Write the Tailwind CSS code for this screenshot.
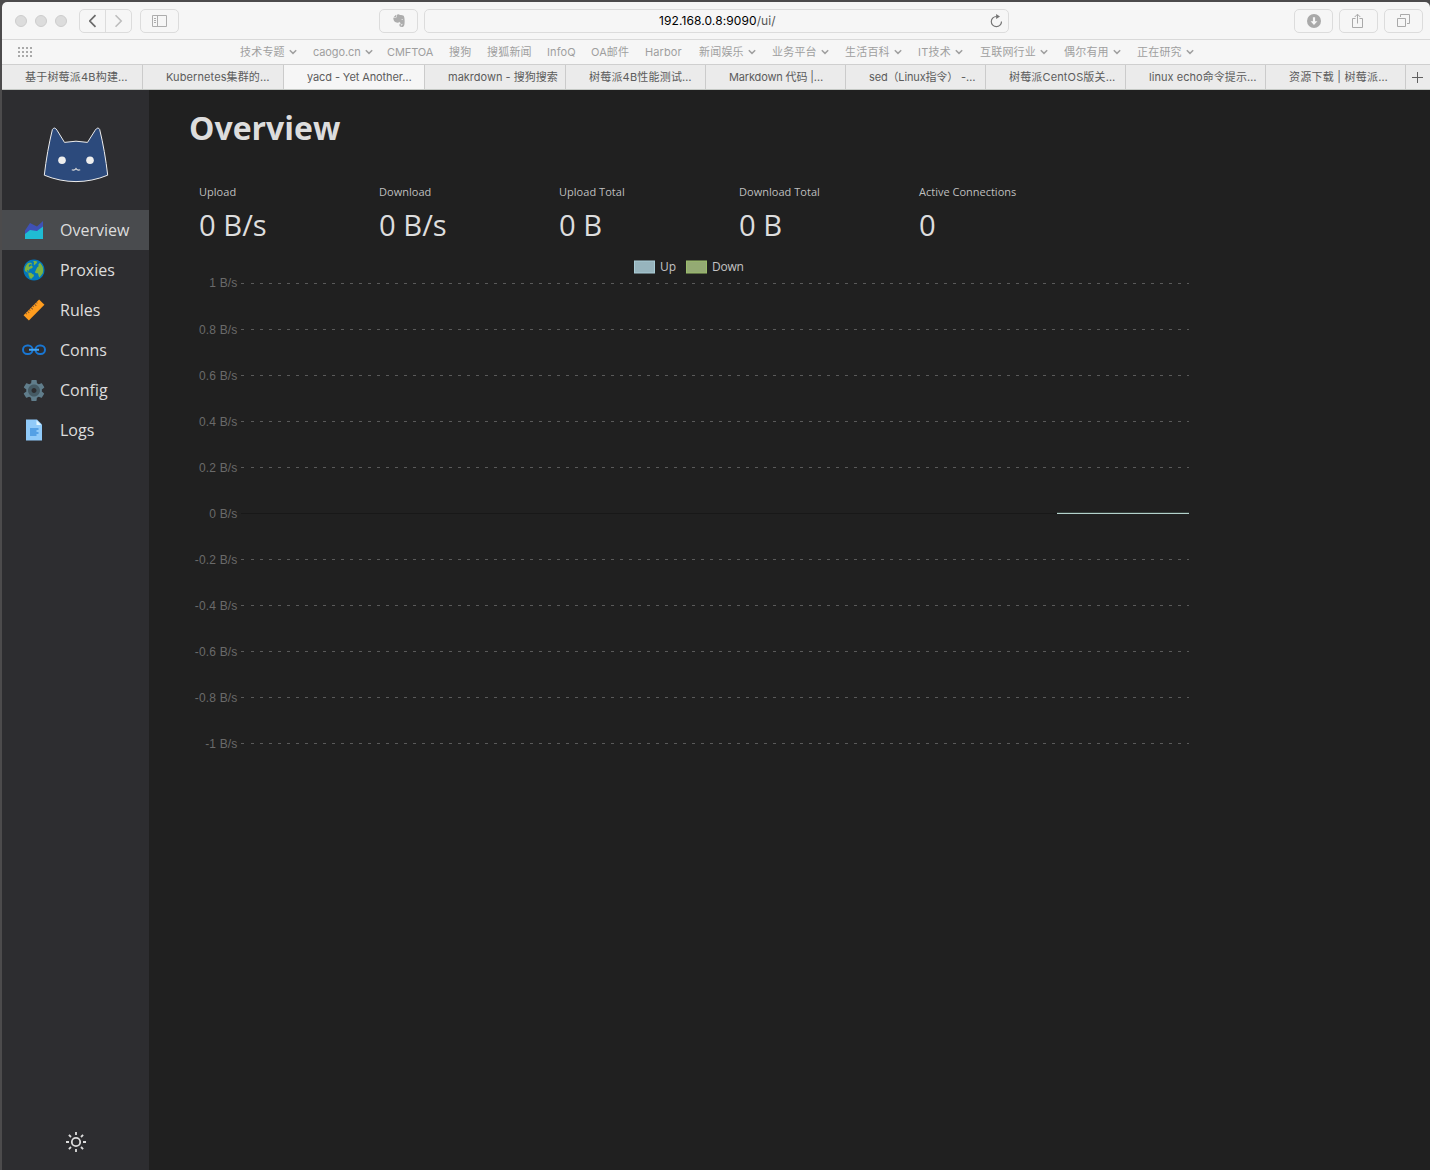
<!DOCTYPE html>
<html lang="zh-CN">
<head>
<meta charset="utf-8">
<title>yacd - Yet Another Clash Dashboard</title>
<script src="https://cdn.jsdelivr.net/npm/@tailwindcss/browser@4"></script>
</head>
<body class="h-[1170px] w-[1430px] overflow-hidden bg-[#4c4b4c] pt-0.5 pl-0.5">
<svg class="hidden"><defs><symbol id="chev" viewBox="0 0 8 6"><path d="M.8 1.2 4 4.400 7.200 1.2" fill="none" stroke="#a0a0a0" stroke-width="1.5"/></symbol></defs></svg>
<div class="flex h-[1168px] w-[1428px] flex-col overflow-hidden rounded-t-[5px] bg-[#202020]">

  <!-- Browser toolbar -->
  <div class="flex h-[38px] shrink-0 items-center border-b border-[#d9d9d9] bg-[#f6f6f6]">
    <div class="ml-[13px] flex gap-2">
      <span class="size-3 rounded-full border border-[#cdcdcd] bg-[#dcdcdc]"></span>
      <span class="size-3 rounded-full border border-[#cdcdcd] bg-[#dcdcdc]"></span>
      <span class="size-3 rounded-full border border-[#cdcdcd] bg-[#dcdcdc]"></span>
    </div>
    <div class="ml-3 flex h-6 w-[53px] rounded-[5px] border border-[#dcdcdc]">
      <span class="flex w-[26px] items-center justify-center border-r border-[#dcdcdc]"><svg width="8" height="14" viewBox="0 0 8 14" fill="none" stroke="#6a6a6a" stroke-width="1.7"><path d="M6.500 1.200 .8 7 6.500 12.800"/></svg></span>
      <span class="flex flex-1 items-center justify-center"><svg width="8" height="14" viewBox="0 0 8 14" fill="none" stroke="#bdbdbd" stroke-width="1.6"><path d="M.5 1.200 6.200 7 .5 12.800"/></svg></span>
    </div>
    <div class="ml-2 flex h-6 w-[39px] items-center justify-center rounded-[5px] border border-[#dcdcdc]">
      <svg width="15" height="12" viewBox="0 0 15 12" fill="none" stroke="#adadad"><path d="M.5 .5h14v11H.5zM5.500 .5v11M2 3.500h2M2 5.500h2M2 7.500h2"/></svg>
    </div>
    <div class="ml-[200px] flex h-6 w-[39px] items-center justify-center rounded-[5px] border border-[#dcdcdc]">
      <svg width="12" height="14" viewBox="0 0 12 14" fill="#adadad"><path d="M3.600 .9C4.800-.1 6.200 0 6.900 1c1.400.1 3.400.2 3.900 1.100.9 1.900 1 5.200.7 7.800-.2 2-1 3.200-2.700 3.200-1.600 0-2.400-.8-2.400-2 0-1.300.9-1.900 2.600-1.800v1c-.8 0-1.300.1-1.300.7 0 .7 1.600.6 1.700-.5 0-1-.6-1.400-1.500-1.500-.8-.1-1.300-.5-1.500-1.300-.7 1.100-1.800 1.200-3 .9C1.500 8.200.7 6.800.4 5c-.1-.6-.1-1 .1-1.200h2.200c.6 0 .9-.3.9-.8z"/><path d="M.5 3.200 3 .8v2.400z"/><path d="M8.400 5.700c.1-.9 1.400-.9 1.600.2-.6-.2-1.100-.2-1.600-.2z" fill="#f6f6f6"/></svg>
    </div>
    <div class="ml-1.5 flex h-6 w-[585px] items-center rounded-[5px] border border-[#dcdcdc] font-[Inter,sans-serif] text-xs text-black">
      <span class="ml-[234px] w-[330px] pt-px tracking-[0.1px]">192.168.0.8:9090<span class="text-[#555]">/ui/</span></span>
      <svg width="14" height="14" viewBox="0 0 14 14" fill="none" stroke="#757575" stroke-width="1.2"><path d="M7.600 2.500A5.100 5.100 0 1 0 12.500 7.500"/><path d="M7.100 0 11 2.600 7.100 5z" fill="#757575" stroke="none"/></svg>
    </div>
    <div class="ml-[285px] flex gap-1.5">
      <span class="flex h-6 w-[39px] items-center justify-center rounded-[5px] border border-[#dcdcdc]"><svg width="14" height="14" viewBox="0 0 14 14"><circle cx="7" cy="7" r="7" fill="#a9a9a9"/><path d="M5.900 3.200h2.200v4h2.300L7 10.900 3.600 7.200h2.300z" fill="#f6f6f6"/></svg></span>
      <span class="flex h-6 w-[39px] items-center justify-center rounded-[5px] border border-[#dcdcdc] pr-px"><svg width="12" height="16" viewBox="0 0 12 16" fill="none" stroke="#a9a9a9"><path d="M3.500 5.500h-3v9h10v-9h-3M5.500 10.500V1.500M2.700 4 5.500 1.200 8.300 4"/></svg></span>
      <span class="flex h-6 w-[39px] items-center justify-center rounded-[5px] border border-[#dcdcdc]"><svg width="13" height="13" viewBox="0 0 13 13" fill="none" stroke="#a9a9a9"><path d="M.5 4.500h8v8h-8zM3.500 3V.5h9v9H10"/></svg></span>
    </div>
  </div>

  <!-- Favourites -->
  <div class="flex h-[25px] shrink-0 items-center border-b border-[#cfcfcf] bg-[#f6f6f6] font-[Inter,'Noto_Sans_CJK_SC',sans-serif] text-[11px] leading-none whitespace-nowrap text-[#9f9f9f]">
    <svg class="ml-4" width="222" height="12" viewBox="0 0 222 12" stroke="#a9a9a9" stroke-width="2" stroke-dasharray="2 2" fill="none"><path d="M0 2h14M0 6h14M0 10h14"/></svg>
    <span class="flex w-[73px] shrink-0 items-center gap-1 tracking-[0.2px]">技术专题<svg width="8" height="6"><use href="#chev"/></svg></span>
    <span class="flex w-[74px] shrink-0 items-center gap-1 tracking-[-0.1px]">caogo.cn<svg width="8" height="6"><use href="#chev"/></svg></span>
    <span class="w-[62px] shrink-0 tracking-[-0.1px]">CMFTOA</span>
    <span class="w-[38px] shrink-0 tracking-[0.2px]">搜狗</span>
    <span class="w-[60px] shrink-0 tracking-[0.2px]">搜狐新闻</span>
    <span class="w-[44px] shrink-0 tracking-[0.1px]">InfoQ</span>
    <span class="w-[54px] shrink-0 tracking-[0.1px]">OA邮件</span>
    <span class="w-[54px] shrink-0 tracking-[0.1px]">Harbor</span>
    <span class="flex w-[73px] shrink-0 items-center gap-1 tracking-[0.2px]">新闻娱乐<svg width="8" height="6"><use href="#chev"/></svg></span>
    <span class="flex w-[73px] shrink-0 items-center gap-1 tracking-[0.2px]">业务平台<svg width="8" height="6"><use href="#chev"/></svg></span>
    <span class="flex w-[73px] shrink-0 items-center gap-1 tracking-[0.2px]">生活百科<svg width="8" height="6"><use href="#chev"/></svg></span>
    <span class="flex w-[62px] shrink-0 items-center gap-1 tracking-[0.2px]">IT技术<svg width="8" height="6"><use href="#chev"/></svg></span>
    <span class="flex w-[84px] shrink-0 items-center gap-1 tracking-[0.2px]">互联网行业<svg width="8" height="6"><use href="#chev"/></svg></span>
    <span class="flex w-[73px] shrink-0 items-center gap-1 tracking-[0.2px]">偶尔有用<svg width="8" height="6"><use href="#chev"/></svg></span>
    <span class="flex w-[73px] shrink-0 items-center gap-1 tracking-[0.2px]">正在研究<svg width="8" height="6"><use href="#chev"/></svg></span>
  </div>

  <!-- Tabs -->
  <div class="flex h-[25px] shrink-0 border-b border-[#c4c8c4] bg-[#ebebeb] font-[Inter,'Noto_Sans_CJK_SC',sans-serif] text-[11px] leading-6 whitespace-nowrap text-[#5c5c5c]">
    <span class="w-[141px] shrink-0 border-r border-[#cbcbcb] pl-[23px] tracking-[0.2px]">基于树莓派4B构建…</span>
    <span class="w-[141px] shrink-0 border-r border-[#cbcbcb] pl-[23px] tracking-[0.1px]">Kubernetes集群的…</span>
    <span class="w-[141px] shrink-0 border-r border-[#cbcbcb] bg-[#f6f6f6] pl-[23px] tracking-[-0.1px]">yacd - Yet Another…</span>
    <span class="w-[141px] shrink-0 border-r border-[#cbcbcb] pl-[23px]">makrdown - 搜狗搜索</span>
    <span class="w-[140px] shrink-0 border-r border-[#cbcbcb] pl-[23px] tracking-[0.2px]">树莓派4B性能测试…</span>
    <span class="w-[140px] shrink-0 border-r border-[#cbcbcb] pl-[23px] tracking-[-0.15px]">Markdown 代码 |…</span>
    <span class="w-[140px] shrink-0 border-r border-[#cbcbcb] pl-[23px] tracking-[-0.15px]">sed（Linux指令） -…</span>
    <span class="w-[140px] shrink-0 border-r border-[#cbcbcb] pl-[23px] tracking-[0.15px]">树莓派CentOS版关…</span>
    <span class="w-[140px] shrink-0 border-r border-[#cbcbcb] pl-[23px] tracking-[0.05px]">linux echo命令提示…</span>
    <span class="w-[140px] shrink-0 border-r border-[#cbcbcb] pl-[23px] tracking-[0.25px]">资源下载 | 树莓派…</span>
    <span class="flex flex-1 items-center pl-1.5"><svg width="11" height="11" stroke="#606060"><path d="M5.500 0v11M0 5.500h11"/></svg></span>
  </div>

  <!-- Dashboard -->
  <div class="flex flex-1 font-['Open_Sans',sans-serif] text-[#ddd]">
    <aside class="flex w-[147px] shrink-0 flex-col bg-[#2d2d30]">
      <div class="flex h-[120px] justify-center pt-[34px]">
        <svg width="68" height="60" viewBox="42 124 68 60"><path d="M52.400 129.500Q54.500 126.300 57 130.200L64.500 142.400Q76 140 87.500 142.400L95.200 130.200Q98 126.300 99.700 129.500C103 143 106 160 107.700 175.200Q92 181.600 76 181.600T44.300 175.200C46 160 49 143 52.400 129.500Z" fill="#2c4a7c" stroke="#eee" stroke-width="1"/><circle cx="62" cy="160.300" r="3.800" fill="#eee"/><circle cx="90" cy="160.300" r="3.800" fill="#eee"/><path d="M71.800 169.800q2.700 1 4.200-1.200q1.500 2.200 4.200 1.200" fill="none" stroke="#ddd" stroke-width="1.100"/></svg>
      </div>
      <nav class="flex flex-col text-base">
        <a class="flex h-10 items-center gap-3.5 bg-[#494b4e] pl-5"><svg width="24" height="24" viewBox="0 0 48 48"><path fill="#3F51B5" d="M42 37H6V25l10-15 14 7L42 6z"/><path fill="#1fbcd3" d="M42 42H6V32l10-8 14 2 12-9z"/></svg>Overview</a>
        <a class="flex h-10 items-center gap-3.5 pl-5"><svg width="24" height="24" viewBox="0 0 48 48"><circle cx="24" cy="24" r="20" fill="#7CB342"/><path fill="#0277BD" d="M45 24c0 11.7-9.5 21-21 21S3 35.7 3 24 12.3 3 24 3s21 9.3 21 21zm-21.2 9.7c0-.4-.2-.6-.6-.8-1.3-.4-2.5-.4-3.6-1.5-.2-.4-.2-.8-.4-1.3-.4-.4-1.5-.6-2.1-.8h-4.2c-.6-.2-1.1-1.1-1.5-1.7 0-.2 0-.6-.4-.6-.4-.2-.8.2-1.3 0-.2-.2-.2-.4-.2-.6 0-.6.4-1.3.8-1.7.6-.4 1.3.2 1.900.2.2 0 .2 0 .4.2.6.2.8 1 .8 1.700v.4c0 .2.2.2.4.2.2-1.100.2-2.100.4-3.200 0-1.300 1.300-2.500 2.300-2.900.4-.2.6.2 1.100 0 1.300-.4 4.400-1.700 3.800-3.400-.4-1.500-1.700-2.900-3.400-2.700-.4.2-.6.4-1 .6-.6.4-1.900 1.700-2.500 1.700-1.100-.2-1.100-1.700-.8-2.300.2-.8 2.100-3.600 3.400-3.100l.8.8c.4.2 1.100.2 1.700.2.2 0 .4 0 .6-.2.2-.2.2-.2.2-.4 0-.6-.6-1.300-1-1.700-.4-.4-1.100-.8-1.700-1.100-2.100-.6-5.500.2-7.100 1.700s-2.900 4-3.800 6.100c-.4 1.300-.8 2.900-1 4.400-.2 1-.4 1.900.2 2.900.6 1.300 1.900 2.500 3.200 3.400.8.6 2.500.6 3.400 1.700.6.8.4 1.900.4 2.900 0 1.300.8 2.300 1.300 3.400.2.6.4 1.500.6 2.100 0 .2.2 1.500.2 1.700 1.300.6 2.300 1.300 3.800 1.700.2 0 1-1.300 1-1.500.6-.6 1.100-1.500 1.700-1.900.4-.2.8-.4 1.300-.8.4-.4.6-1.300.8-1.900.1-.5.3-1.300.1-1.900zm.4-19.300c.2 0 .4-.2.8-.4.6-.4 1.300-1.100 1.900-1.500.6-.4 1.300-1.100 1.700-1.500.6-.4 1.100-1.300 1.300-1.900.2-.4.8-1.300.6-1.900-.2-.4-1.300-.6-1.700-.8-1.700-.4-3.100-.6-4.800-.6-.6 0-1.500.2-1.700.8-.2 1.100.6.8 1.500 1.100 0 0 .2 1.700.2 1.900.2 1-.4 1.700-.4 2.700 0 .6 0 1.700.4 2.100h.2zM41.800 29c.2-.4.2-1.100.4-1.500.2-1 .2-2.100.2-3.100 0-2.100-.2-4.200-.8-6.100-.4-.6-.6-1.300-.8-1.900-.4-1.100-1-2.100-1.900-2.900-.8-1.100-1.900-4-3.800-3.100-.6.2-1 1-1.500 1.500-.4.6-.8 1.300-1.300 1.900-.2.2-.4.6-.2.8 0 .2.2.2.4.2.4.2.6.2 1 .4.2 0 .4.2.2.4 0 0 0 .2-.2.2-1 1.100-2.100 1.900-3.100 2.900-.2.2-.4.6-.4.8 0 .2.2.2.2.4s-.2.2-.4.4c-.4.2-.8.4-1.100.6-.2.4 0 1.100-.2 1.500-.2 1.100-.8 1.900-1.300 2.900-.4.6-.6 1.300-1 1.900 0 .8-.2 1.500.2 2.100 1 1.500 2.900.6 4.400 1.300.4.2.8.2 1.100.6.6.6.6 1.700.8 2.300.2.8.4 1.700.8 2.500.2 1 .6 2.100.8 2.900 1.900-1.500 3.600-3.100 4.800-5.200 1.500-1.300 2.100-3 2.700-4.700z"/></svg>Proxies</a>
        <a class="flex h-10 items-center gap-3.5 pl-5"><svg width="24" height="24" viewBox="0 0 48 48"><g transform="rotate(-45 24 24)"><path fill="#FF9D1f" d="M2 16.500h44v15H2z"/><path stroke="#8a5a2b" stroke-width="2" d="M8 16.500v3M13 16.500v5M18 16.500v3M23 16.500v5M28 16.500v3M33 16.500v5M38 16.500v3"/></g></svg>Rules</a>
        <a class="flex h-10 items-center gap-3.5 pl-5"><svg width="24" height="24" viewBox="0 0 48 48" fill="none" stroke="#1976D2" stroke-width="4"><rect x="2" y="15" width="19" height="17" rx="8.500"/><rect x="27" y="15" width="19" height="17" rx="8.500"/><path stroke="#42A5F5" d="M14 23.500h20"/></svg>Conns</a>
        <a class="flex h-10 items-center gap-3.5 pl-5"><svg width="24" height="24" viewBox="0 0 48 48"><path fill="#607D8B" d="M39.600 27.200c.1-.7.2-1.400.2-2.200s-.1-1.500-.2-2.200l4.500-3.200c.4-.3.6-.9.3-1.400L40 10.800c-.3-.5-.8-.7-1.300-.4l-5 2.300c-1.200-.9-2.400-1.600-3.800-2.200l-.5-5.500c-.1-.5-.5-.9-1-.9h-8.600c-.5 0-1 .4-1 .9l-.5 5.500c-1.400.6-2.700 1.300-3.800 2.200l-5-2.300c-.5-.2-1.100 0-1.300.4l-4.300 7.400c-.3.5-.1 1.100.3 1.400l4.500 3.200c-.1.7-.2 1.400-.2 2.200s.1 1.500.2 2.200L4 30.400c-.4.3-.6.9-.3 1.400L8 39.200c.3.5.8.7 1.300.4l5-2.300c1.200.9 2.400 1.600 3.800 2.200l.5 5.500c.1.5.5.9 1 .9h8.600c.5 0 1-.4 1-.9l.5-5.500c1.400-.6 2.700-1.300 3.800-2.200l5 2.300c.5.2 1.100 0 1.300-.4l4.300-7.400c.3-.5.1-1.100-.3-1.400zM24 35c-5.500 0-10-4.500-10-10s4.500-10 10-10 10 4.500 10 10-4.500 10-10 10z"/><path fill="#455A64" d="M24 13c-6.600 0-12 5.400-12 12s5.400 12 12 12 12-5.400 12-12-5.400-12-12-12zm0 17c-2.800 0-5-2.200-5-5s2.200-5 5-5 5 2.200 5 5-2.200 5-5 5z"/></svg>Config</a>
        <a class="flex h-10 items-center gap-3.5 pl-5"><svg width="24" height="24" viewBox="0 0 48 48"><path fill="#90CAF9" d="M40 45H8V3h22l10 10z"/><path fill="#E1F5FE" d="M38.500 14H29V4.500z"/><path fill="#1976D2" d="M16 21h17v2H16zM16 25h13v2H16zM16 29h17v2H16zM16 33h13v2H16z"/></svg>Logs</a>
      </nav>
      <div class="mt-auto flex h-14 items-center justify-center">
        <svg width="20" height="20" viewBox="0 0 20 20" fill="none" stroke="#ddd" stroke-width="1.800"><circle cx="10" cy="10" r="4.200"/><path d="M10 0v3M10 17v3M0 10h3M17 10h3M2.900 2.900l2.100 2.100M15 15l2.100 2.100M2.900 17.100l2.100-2.100M15 5l2.100-2.100"/></svg>
      </div>
    </aside>

    <main class="flex flex-col pl-10">
      <h1 class="mt-[15px] h-[47px] text-[32px] leading-[46px] font-bold">Overview</h1>
      <div class="mt-8 flex pl-2.5">
        <div class="w-[180px]"><div class="text-[11px] leading-4 tracking-[0.03px] text-[#bfbfbf]">Upload</div><div class="text-[29.200px] leading-[50px]">0 B/s</div></div>
        <div class="w-[180px]"><div class="text-[11px] leading-4 tracking-[0.03px] text-[#bfbfbf]">Download</div><div class="text-[29.200px] leading-[50px]">0 B/s</div></div>
        <div class="w-[180px]"><div class="text-[11px] leading-4 tracking-[0.03px] text-[#bfbfbf]">Upload Total</div><div class="text-[29.200px] leading-[50px]">0 B</div></div>
        <div class="w-[180px]"><div class="text-[11px] leading-4 tracking-[0.03px] text-[#bfbfbf]">Download Total</div><div class="text-[29.200px] leading-[50px]">0 B</div></div>
        <div class="w-[180px]"><div class="text-[11px] leading-4 text-[#bfbfbf]">Active Connections</div><div class="text-[29.200px] leading-[50px]">0</div></div>
      </div>
      <!-- Traffic chart -->
      <svg width="1001" height="500" viewBox="189 250 1001 500">
        <g stroke-width="1"><rect x="634.500" y="261" width="20" height="12" fill="#97b4bd" stroke="#a9ccd6"/><rect x="686.500" y="261" width="20" height="12" fill="#94aa73" stroke="#9bbd6b"/></g>
        <g class="text-xs" fill="#c4c4c4"><text x="660" y="271">Up</text><text x="712" y="271" class="tracking-[-0.2px]">Down</text></g>
        <g stroke="#5a5a5a" stroke-dasharray="3 6">
          <path stroke-dasharray="none" d="M241 283.500h3M241 329.500h3M241 375.500h3M241 421.500h3M241 467.500h3M241 559.500h3M241 605.500h3M241 651.500h3M241 697.500h3M241 743.500h3"/>
          <path d="M251 283.500h938M251 329.500h938M251 375.500h938M251 421.500h938M251 467.500h938M251 559.500h938M251 605.500h938M251 651.500h938M251 697.500h938M251 743.500h938"/>
        </g>
        <path stroke="#181818" d="M241 513.500h816"/>
        <path stroke="#35403c" d="M1057 512.500h132"/><path stroke="#b4d2cc" d="M1057 513.500h132"/>
        <g class="font-['Liberation_Sans',sans-serif] text-xs tracking-[0.17px]" fill="#6a6a6a" text-anchor="end">
          <text x="237.500" y="287">1 B/s</text><text x="237.500" y="334">0.8 B/s</text><text x="237.500" y="380">0.6 B/s</text><text x="237.500" y="426">0.4 B/s</text><text x="237.500" y="472">0.2 B/s</text><text x="237.500" y="518">0 B/s</text><text x="237.500" y="564">-0.2 B/s</text><text x="237.500" y="610">-0.4 B/s</text><text x="237.500" y="656">-0.6 B/s</text><text x="237.500" y="702">-0.8 B/s</text><text x="237.500" y="748">-1 B/s</text>
        </g>
      </svg>
    </main>
  </div>
</div>
</body>
</html>
